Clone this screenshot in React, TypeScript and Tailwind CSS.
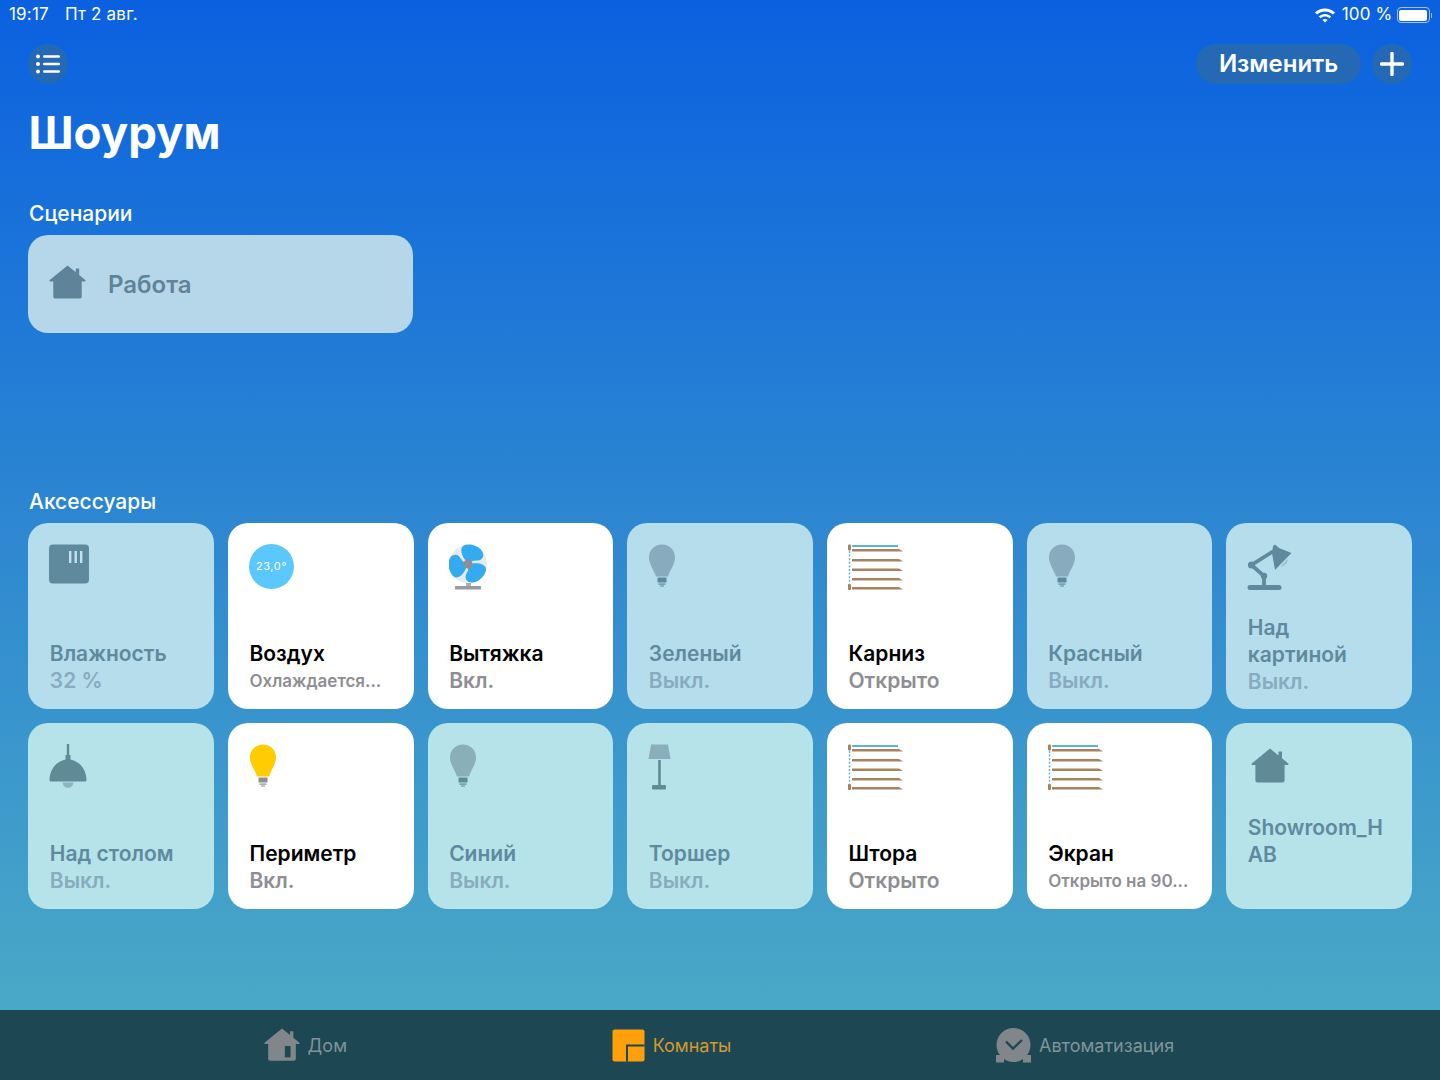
import { ReactNode } from "react";

const OFF_DARK = "#5f8a9e";

function House({ color, door, width = 37 }: { color: string; door?: string; width?: number }) {
  return (
    <svg width={width} height={(width * 35) / 38} viewBox="0 0 38 35">
      <path
        d="M19 0.5 L27.5 7.5 V3.5 H31 V10.3 L37.2 15.4 Q38.3 16.6 36.6 16.9 H33.6 V32.5 Q33.6 34.5 31.6 34.5 H6.4 Q4.4 34.5 4.4 32.5 V16.9 H1.4 Q-0.3 16.6 0.8 15.4 Z"
        fill={color}
      />
      {door && <rect x="22" y="19" width="6" height="12" fill={door} />}
    </svg>
  );
}

function Bulb({ color, base }: { color: string; base: string }) {
  return (
    <svg width="28" height="43" viewBox="0 0 28 43">
      <path
        d="M14 0.5 C21.5 0.5 27 6 27 13.5 C27 20 22.5 25 20 32.5 H8 C5.5 25 1 20 1 13.5 C1 6 6.5 0.5 14 0.5 Z"
        fill={color}
      />
      <rect x="9.5" y="33.5" width="9" height="5" fill={base} />
      <rect x="10.5" y="39.5" width="7" height="1.2" fill={base} />
      <rect x="12" y="41.5" width="4" height="1" fill={base} />
    </svg>
  );
}

function Humidity() {
  return (
    <svg width="40" height="40" viewBox="0 0 40 40">
      <rect x="0" y="0.5" width="40" height="39" rx="4" fill="#5f8a9e" />
      <rect x="20" y="7" width="2.4" height="12" fill="#c3e0ec" />
      <rect x="25.5" y="7" width="2.4" height="12" fill="#c3e0ec" />
      <rect x="31" y="7" width="2.4" height="12" fill="#c3e0ec" />
    </svg>
  );
}

function Thermostat() {
  return (
    <div className="flex h-[45px] w-[45px] items-center justify-center rounded-full bg-[#5ac8fa] text-[11px] tracking-[0.6px] text-white">
      23,0°
    </div>
  );
}

function Fan() {
  // one blade, drawn pointing up and to the right, then turned twice
  const blade = "M17 17 C12 11 11 5 14 2 C19 -1 29 1 33 7 C36 12 33 16.5 28 16.5 C24.5 16.5 22 17 21 20 Z";
  return (
    <svg width="38" height="46" viewBox="0 0 38 46">
      <circle cx="19" cy="20" r="19" fill="#e6ebef" />
      <path d={blade} fill="#34aaf0" />
      <path d={blade} fill="#34aaf0" transform="rotate(120 19 20)" />
      <path d={blade} fill="#34aaf0" transform="rotate(240 19 20)" />
      <circle cx="19" cy="20" r="4.5" fill="#8e8e93" />
      <rect x="17" y="39" width="5" height="3" fill="#b0b0b4" />
      <rect x="6" y="42" width="26" height="3.5" fill="#9a9a9e" />
    </svg>
  );
}

function Blinds() {
  const rows = [5, 15, 24.5, 34, 43];
  return (
    <svg width="56" height="47" viewBox="0 0 56 47">
      <rect x="4" y="1" width="46" height="2" fill="#5ab4d6" />
      {rows.map((y) => (
        <path key={y} d={`M4 ${y} H51 L55 ${y + 2.6} H4 Z`} fill="#a5835f" />
      ))}
      <rect x="0" y="0.5" width="3" height="6" rx="1" fill="#a5835f" />
      <rect x="0" y="40" width="3" height="6" rx="1" fill="#a5835f" />
      <path d="M1.5 7 V40" stroke="#5ab4d6" strokeWidth="1.4" strokeDasharray="2 1.6" />
    </svg>
  );
}

function DeskLamp() {
  return (
    <svg width="45" height="46" viewBox="0 0 45 46">
      <g stroke={OFF_DARK} strokeWidth="3.8" strokeLinecap="round" fill="none">
        <path d="M25 8 L4.5 21 L17 32 V41" />
      </g>
      <circle cx="4.5" cy="21" r="3.6" fill={OFF_DARK} />
      <circle cx="17" cy="32" r="3.2" fill={OFF_DARK} />
      <path d="M26 2 L28 0.5 L32 4 L44.5 9 L28 26 L25 9 Z" fill={OFF_DARK} />
      <path d="M36 22 Q41 20 40.5 15 L33.5 23 Q34.5 23 36 22 Z" fill="#9bbccb" />
      <rect x="0.5" y="41" width="34" height="5" rx="2.5" fill={OFF_DARK} />
    </svg>
  );
}

function Pendant() {
  return (
    <svg width="38" height="46" viewBox="0 0 38 46">
      <rect x="17.8" y="0" width="2.4" height="11" fill="#5f8a96" />
      <path d="M16.5 11 H21.5 V15.5 C30 17.5 37 24 37.5 36 Q37.5 37.5 36 37.5 H2 Q0.5 37.5 0.5 36 C1 24 8 17.5 16.5 15.5 Z" fill="#5f8a96" />
      <path d="M13.5 38.5 H24.5 C24 45.5 14 45.5 13.5 38.5 Z" fill="#8fb4bd" />
    </svg>
  );
}

function FloorLamp() {
  return (
    <svg width="23" height="46" viewBox="0 0 23 46">
      <path d="M3 0.5 H20 L22.5 15 H0.5 Z" fill="#8aaebb" />
      <rect x="10.2" y="16" width="2.6" height="25" fill="#5f8a96" />
      <rect x="4" y="41" width="14" height="4.5" rx="1" fill="#5f8a96" />
    </svg>
  );
}

type Tile = {
  name: string;
  status: string;
  icon: ReactNode;
  on?: boolean;
  small?: boolean;
  iconClass?: string;
};

const rowOne: Tile[] = [
  { name: "Влажность", status: "32 %", icon: <Humidity /> },
  { name: "Воздух", status: "Охлаждается...", icon: <Thermostat />, on: true, small: true },
  { name: "Вытяжка", status: "Вкл.", icon: <Fan />, on: true },
  { name: "Зеленый", status: "Выкл.", icon: <Bulb color="#88acbe" base="#5f8a9e" /> },
  { name: "Карниз", status: "Открыто", icon: <Blinds />, on: true },
  { name: "Красный", status: "Выкл.", icon: <Bulb color="#88acbe" base="#5f8a9e" /> },
  { name: "Над\nкартиной", status: "Выкл.", icon: <DeskLamp /> },
];

const rowTwo: Tile[] = [
  { name: "Над столом", status: "Выкл.", icon: <Pendant /> },
  { name: "Периметр", status: "Вкл.", icon: <Bulb color="#ffcc00" base="#8e8e93" />, on: true },
  { name: "Синий", status: "Выкл.", icon: <Bulb color="#8aafb9" base="#5f8a96" /> },
  { name: "Торшер", status: "Выкл.", icon: <FloorLamp /> },
  { name: "Штора", status: "Открыто", icon: <Blinds />, on: true },
  { name: "Экран", status: "Открыто на 90...", icon: <Blinds />, on: true, small: true },
  { name: "Showroom_H\nAB", status: "", icon: <House color="#5f8a96" width={38} />, iconClass: "pl-1 pt-1" },
];

function AccessoryTile({ tile, offBg }: { tile: Tile; offBg: string }) {
  const twoLines = tile.name.includes("\n");
  return (
    <div className={`flex h-[186px] flex-col justify-between rounded-[20px] pt-[21px] pr-2 pl-[21px] ${twoLines ? "pb-[14px]" : "pb-[15px]"} ${tile.on ? "bg-white" : offBg}`}>
      <div className={tile.iconClass}>{tile.icon}</div>
      <div className="ml-[0.5px] text-[21px] leading-[27px] font-semibold">
        <div className={`whitespace-pre-line ${tile.on ? "text-black" : "text-[#5f8a9e]"}`}>{tile.name}</div>
        <div className={`h-[27px] ${tile.small ? "pt-[1px] text-[17px]" : ""} ${tile.on ? "text-[#8e8e93]" : "text-[#88acbe]"}`}>{tile.status}</div>
      </div>
    </div>
  );
}

export default function App() {
  return (
    <div className="flex h-[1080px] w-[1440px] flex-col overflow-hidden bg-gradient-to-b from-[#0b60e0] via-[#2f88d0] to-[#4eadc5] font-['Inter',sans-serif] text-white">
      <div className="flex h-[28px] items-center justify-between pt-[2px] pr-2 pl-[9px] text-[17px] tracking-[0.2px]">
        <div className="flex gap-[16px]">
          <span>19:17</span>
          <span>Пт 2 авг.</span>
        </div>
        <div className="flex items-center gap-[4px]">
          <svg className="mr-[3px]" width="20" height="15" viewBox="0 0 20 15">
            <path d="M10 14.5 L0 4.6 C5.5 -0.8 14.5 -0.8 20 4.6 L18 6.6 C13.5 2.3 6.5 2.3 2 6.6 L3.8 8.5 C7.3 5 12.7 5 16.2 8.5 L14.4 10.3 C12 7.9 8 7.9 5.6 10.3 L7.4 12 C8.9 10.6 11.1 10.6 12.6 12 Z" fill="white" />
          </svg>
          <span>100 %</span>
          <div className="flex items-center">
            <div className="h-[16px] w-[33px] rounded-[4px] border border-[#9cc2f2] p-[1.5px]">
              <div className="h-full w-full rounded-[2px] bg-white" />
            </div>
            <div className="ml-[1px] h-[5px] w-[1.5px] rounded-r-sm bg-[#9cc2f2]" />
          </div>
        </div>
      </div>

      <div className="flex-1 px-[28px]">
        <div className="mt-[16px] flex items-center justify-between">
          <div className="flex h-[40px] w-[40px] items-center justify-center rounded-full bg-[#2569b5]">
            <svg width="24" height="20" viewBox="0 0 24 20">
              <circle cx="2" cy="2.5" r="2" fill="white" />
              <circle cx="2" cy="10" r="2" fill="white" />
              <circle cx="2" cy="17.5" r="2" fill="white" />
              <rect x="7" y="1.2" width="17" height="2.6" rx="1.2" fill="white" />
              <rect x="7" y="8.7" width="17" height="2.6" rx="1.2" fill="white" />
              <rect x="7" y="16.2" width="17" height="2.6" rx="1.2" fill="white" />
            </svg>
          </div>
          <div className="flex items-center gap-[11px]">
            <div className="flex h-[40px] w-[165px] items-center justify-center rounded-full bg-[#2569b5] text-[24px] font-semibold">Изменить</div>
            <div className="flex h-[40px] w-[40px] items-center justify-center rounded-full bg-[#2569b5]">
              <svg width="24" height="24" viewBox="0 0 24 24">
                <path d="M12 1.5 V22.5 M1.5 12 H22.5" stroke="white" strokeWidth="3.4" strokeLinecap="round" />
              </svg>
            </div>
          </div>
        </div>

        <h1 className="mt-[20px] ml-[0.5px] text-[45.6px] leading-[58px] font-bold">Шоурум</h1>

        <div className="mt-[38px] ml-[1px] text-[21px] leading-[28px] font-medium">Сценарии</div>
        <div className="mt-[7px] flex h-[98px] w-[385px] items-center gap-[22px] rounded-[20px] bg-[#b6d7ea] pl-[21px]">
          <div className="mb-[3px]">
            <House color="#5f8398" />
          </div>
          <span className="mt-[1px] text-[24px] font-semibold text-[#5f8398]">Работа</span>
        </div>

        <div className="mt-[155px] ml-[1px] text-[21px] leading-[28px] font-medium">Аксессуары</div>
        <div className="mt-[7px] ml-[0.3px] grid grid-cols-7 gap-[14px]">
          {rowOne.map((t) => (
            <AccessoryTile key={t.name} tile={t} offBg="bg-[#b5ddec]" />
          ))}
          {rowTwo.map((t) => (
            <AccessoryTile key={t.name} tile={t} offBg="bg-[#b6e3ea]" />
          ))}
        </div>
      </div>

      <div className="grid h-[70px] grid-cols-[1fr_1fr_1fr] items-center bg-[#1c4753] text-[18px]">
        <div className="flex items-center justify-end gap-[8px] pr-[133px] text-[#80949c]">
          <House color="#80868a" door="#1c4753" width={36} />
          <span>Дом</span>
        </div>
        <div className="flex items-center justify-center gap-[8px] pr-[97px] text-[#d49a2e]">
          <svg width="33" height="33" viewBox="0 0 33 33">
            <rect x="0.5" y="0.5" width="32" height="32" rx="2" fill="#ff9f0a" />
            <path d="M15 32.5 V16.5 H32.5" stroke="#1c4753" strokeWidth="2" fill="none" />
          </svg>
          <span>Комнаты</span>
        </div>
        <div className="flex items-center gap-[8px] pl-[36px] text-[#80949c]">
          <svg width="35" height="35" viewBox="0 0 35 35">
            <rect x="0" y="27" width="8" height="7.5" fill="#80868a" />
            <rect x="27" y="27" width="8" height="7.5" fill="#80868a" />
            <circle cx="17.5" cy="17" r="17" fill="#80868a" />
            <path d="M10 13.5 L17 20.5 L26 12" stroke="#1c4753" strokeWidth="2.4" fill="none" />
          </svg>
          <span>Автоматизация</span>
        </div>
      </div>
    </div>
  );
}
